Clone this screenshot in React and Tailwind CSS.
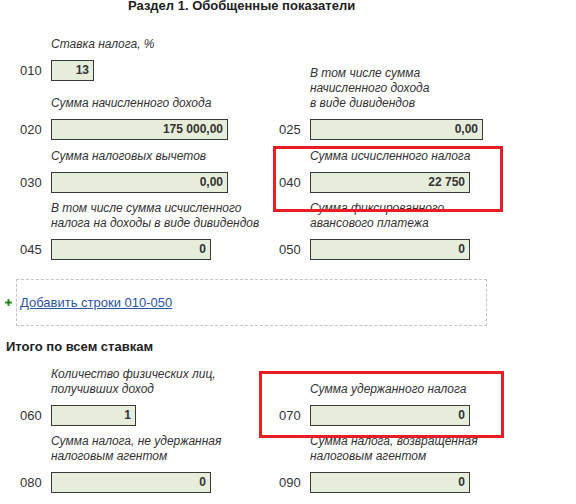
import React from "react";

function Field({ code, label, value, w, className = "" }) {
  return (
    <div className={className}>
      {label && (
        <div className="ml-[31px] mb-[8px] text-[12px] leading-[15px] italic text-[#333]">
          {label.map((l, i) => (
            <div key={i}>{l}</div>
          ))}
        </div>
      )}
      <div className="flex items-center">
        <div className="w-[31px] text-[13px] leading-[16px] text-[#333]">{code}</div>
        <div
          className={`${w} h-[21px] border border-[#3a3a3a] bg-[#e6eedb] text-right pr-[4px] text-[12px] font-bold leading-[19px] text-[#333]`}
        >
          {value}
        </div>
      </div>
    </div>
  );
}

export default function App() {
  return (
    <div className="relative w-[576px] h-[504px] overflow-hidden bg-white font-['Liberation_Sans',Arial,sans-serif] text-[#333]">
      <div className="pl-[6px]">
        <div className="mt-[-2px] h-[16px] pl-[122px] text-[13px] font-bold leading-[16px] text-[#222]">
          Раздел 1. Обобщенные показатели
        </div>

        <div className="ml-[14px] mt-[23px] grid grid-cols-[259px_1fr] items-end">
          <div>
            <Field code="010" label={["Ставка налога, %"]} value="13" w="w-[43px]" />
            <Field
              className="mt-[15px]"
              code="020"
              label={["Сумма начисленного дохода"]}
              value="175 000,00"
              w="w-[177px]"
            />
          </div>
          <Field
            code="025"
            label={["В том числе сумма", "начисленного дохода", "в виде дивидендов"]}
            value="0,00"
            w="w-[173px]"
          />
        </div>

        <div className="ml-[14px] mt-[9px] grid grid-cols-[259px_1fr] items-end">
          <Field code="030" label={["Сумма налоговых вычетов"]} value="0,00" w="w-[177px]" />
          <Field code="040" label={["Сумма исчисленного налога"]} value="22 750" w="w-[160px]" />
        </div>

        <div className="ml-[14px] mt-[8px] grid grid-cols-[259px_1fr] items-end">
          <Field
            code="045"
            label={["В том числе сумма исчисленного", "налога на доходы в виде дивидендов"]}
            value="0"
            w="w-[160px]"
          />
          <Field
            code="050"
            label={["Сумма фиксированного", "авансового платежа"]}
            value="0"
            w="w-[160px]"
          />
        </div>

        <div className="mt-[19px] flex items-center">
          <div className="w-[10px] flex items-center">
            <svg width="7" height="7" viewBox="0 0 7 7" className="-ml-[1px]">
              <rect x="2.5" y="0" width="2" height="7" fill="#2f9a23" />
              <rect x="0" y="2.5" width="7" height="2" fill="#2f9a23" />
              <rect x="2.5" y="2.5" width="2" height="2" fill="#1f6a15" />
            </svg>
          </div>
          <div className="w-[471px] h-[47px] border border-dashed border-[#c4c4c4] flex items-center pl-[3px]">
            <span className="text-[13px] leading-[16px] text-[#2b53a7] underline">
              Добавить строки 010-050
            </span>
          </div>
        </div>

        <div className="mt-[13px] text-[13px] font-bold leading-[16px] text-[#222]">
          Итого по всем ставкам
        </div>

        <div className="ml-[14px] mt-[12px] grid grid-cols-[259px_1fr] items-end">
          <Field
            code="060"
            label={["Количество физических лиц,", "получивших доход"]}
            value="1"
            w="w-[85px]"
          />
          <Field code="070" label={["Сумма удержанного налога"]} value="0" w="w-[160px]" />
        </div>

        <div className="ml-[14px] mt-[8px] grid grid-cols-[259px_1fr] items-end">
          <Field
            code="080"
            label={["Сумма налога, не удержанная", "налоговым агентом"]}
            value="0"
            w="w-[160px]"
          />
          <Field
            code="090"
            label={["Сумма налога, возвращенная", "налоговым агентом"]}
            value="0"
            w="w-[160px]"
          />
        </div>
      </div>

      <div className="absolute left-[273px] top-[146px] w-[230px] h-[66px] border-[3px] border-[#ec1c24]" />
      <div className="absolute left-[259px] top-[371px] w-[245px] h-[67px] border-[3px] border-[#ec1c24]" />
    </div>
  );
}
